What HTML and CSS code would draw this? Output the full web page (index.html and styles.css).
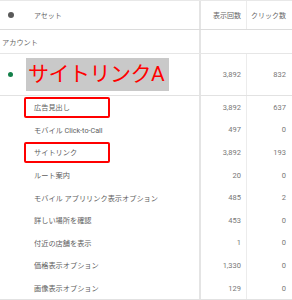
FILE: index.html
```html
<!DOCTYPE html>
<html lang="ja">
<head>
<meta charset="utf-8">
<link rel="stylesheet" href="styles.css">
</head>
<body>
<div class="table">
  <div class="row head">
    <div class="cell c1"><span class="dot gray"></span><span class="htext">アセット</span></div>
    <div class="cell c2 num">表示回数</div>
    <div class="cell c3 num">クリック数</div>
  </div>
  <div class="row account">
    <div class="cell c1"><span class="acc">アカウント</span></div>
    <div class="cell c23"></div>
  </div>
  <div class="row big">
    <div class="cell c1"><span class="dot green"></span><span class="bigtag">サイトリンクA</span></div>
    <div class="cell c2 num">3,892</div>
    <div class="cell c3 num">832</div>
  </div>
  <div class="row sub">
    <div class="cell c1"><span class="label boxed">広告見出し</span></div>
    <div class="cell c2 num">3,892</div>
    <div class="cell c3 num">637</div>
  </div>
  <div class="row sub">
    <div class="cell c1"><span class="label">モバイル Click-to-Call</span></div>
    <div class="cell c2 num">497</div>
    <div class="cell c3 num">0</div>
  </div>
  <div class="row sub">
    <div class="cell c1"><span class="label boxed">サイトリンク</span></div>
    <div class="cell c2 num">3,892</div>
    <div class="cell c3 num">193</div>
  </div>
  <div class="row sub">
    <div class="cell c1"><span class="label">ルート案内</span></div>
    <div class="cell c2 num">20</div>
    <div class="cell c3 num">0</div>
  </div>
  <div class="row sub">
    <div class="cell c1"><span class="label">モバイル アプリリンク表示オプション</span></div>
    <div class="cell c2 num">485</div>
    <div class="cell c3 num">2</div>
  </div>
  <div class="row sub">
    <div class="cell c1"><span class="label">詳しい場所を確認</span></div>
    <div class="cell c2 num">453</div>
    <div class="cell c3 num">0</div>
  </div>
  <div class="row sub">
    <div class="cell c1"><span class="label">付近の店舗を表示</span></div>
    <div class="cell c2 num">1</div>
    <div class="cell c3 num">0</div>
  </div>
  <div class="row sub">
    <div class="cell c1"><span class="label">価格表示オプション</span></div>
    <div class="cell c2 num">1,330</div>
    <div class="cell c3 num">0</div>
  </div>
  <div class="row sub last">
    <div class="cell c1"><span class="label">画像表示オプション</span></div>
    <div class="cell c2 num">129</div>
    <div class="cell c3 num">0</div>
  </div>
</div>
</body>
</html>
```

FILE: styles.css
```css
html, body {
  margin: 0;
  padding: 0;
  background: #fff;
}
body {
  width: 292px;
  height: 300px;
  overflow: hidden;
  font-family: Roboto, "Noto Sans CJK JP", sans-serif;
  color: #666;
}
.table {
  display: flex;
  flex-direction: column;
}
.row {
  display: grid;
  grid-template-columns: 199px 47px 46px;
}
.cell {
  display: flex;
  align-items: center;
  min-width: 0;
  white-space: nowrap;
  overflow: hidden;
}
.c2 {
  border-left: 2px solid #e4e4e4;
  padding-right: 5px;
}
.c3 {
  border-left: 1px solid #ececec;
  padding-right: 6px;
}
.c23 {
  grid-column: 2 / 4;
  border-left: 2px solid #e4e4e4;
}
.num {
  justify-content: flex-end;
  font-size: 7.5px;
  color: #777;
}
.head {
  height: 28px;
  border-top: 1px solid #e8e8e8;
  border-bottom: 1px solid #dcdcdc;
}
.head .num {
  font-size: 7px;
  color: #666;
}
.head .c1 {
  padding-left: 8px;
}
.dot {
  display: inline-block;
  border-radius: 50%;
  flex: none;
}
.dot.gray {
  width: 6px;
  height: 6px;
  background: #5a5a5a;
}
.dot.green {
  width: 5px;
  height: 5px;
  background: #13804a;
}
.htext {
  margin-left: 20px;
  font-size: 7px;
  color: #666;
}
.account {
  height: 23px;
  border-bottom: 1px solid #e6e6e6;
}
.acc {
  margin-left: 2px;
  font-size: 7.2px;
  color: #666;
}
.big {
  height: 41px;
  border-bottom: 1px solid #e2e2e2;
}
.big .c1 {
  padding-left: 8px;
}
.bigtag {
  margin-left: 13px;
  height: 33px;
  width: 143px;
  box-sizing: border-box;
  padding-left: 2px;
  background: #c9c9c9;
  color: #ff0000;
  font-size: 21px;
  line-height: 33px;
  letter-spacing: -0.5px;
}
.sub {
  height: 22.6px;
}
.sub.last {
  border-bottom: 1px solid #e2e2e2;
}
.label {
  margin-left: 24px;
  box-sizing: border-box;
  height: 21px;
  display: inline-flex;
  align-items: center;
  padding-left: 8px;
  border: 2px solid transparent;
  font-size: 7.2px;
  color: #5e5e5e;
}
.label.boxed {
  width: 86px;
  border-color: #ff0000;
  border-radius: 2px;
}
```
